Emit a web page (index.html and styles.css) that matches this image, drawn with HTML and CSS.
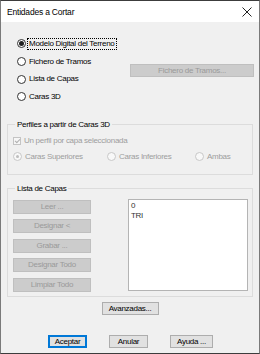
FILE: index.html
```html
<!DOCTYPE html>
<html lang="es">
<head>
    <meta charset="UTF-8">
    <title>Entidades a Cortar</title>
    <link rel="stylesheet" href="styles.css">
</head>
<body>
    <div class="window">
        <div class="titlebar">
            <span class="title">Entidades a Cortar</span>
            <svg class="close" width="10" height="10" viewBox="0 0 10 10">
                <path d="M0.5 0.5 L9.5 9.5 M9.5 0.5 L0.5 9.5" stroke="#222" stroke-width="1" fill="none"/>
            </svg>
        </div>

        <div class="content">
            <div class="source">
                <div class="source-options">
                    <div class="option"><span class="radio checked"></span><span class="label focused">Modelo Digital del Terreno</span></div>
                    <div class="option"><span class="radio"></span><span class="label">Fichero de Tramos</span></div>
                    <div class="option"><span class="radio"></span><span class="label">Lista de Capas</span></div>
                    <div class="option"><span class="radio"></span><span class="label">Caras 3D</span></div>
                </div>
                <button class="btn disabled wide">Fichero de Tramos...</button>
            </div>

            <fieldset class="group group-faces">
                <legend>Perfiles a partir de Caras 3D</legend>
                <div class="option disabled"><span class="check"></span><span class="label">Un perfil por capa seleccionada</span></div>
                <div class="faces-row">
                    <div class="option disabled"><span class="radio checked"></span><span class="label">Caras Superiores</span></div>
                    <div class="option disabled"><span class="radio"></span><span class="label">Caras Inferiores</span></div>
                    <div class="option disabled"><span class="radio"></span><span class="label">Ambas</span></div>
                </div>
            </fieldset>

            <fieldset class="group group-layers">
                <legend>Lista de Capas</legend>
                <div class="layers">
                    <div class="layer-buttons">
                        <button class="btn disabled">Leer ...</button>
                        <button class="btn disabled">Designar &lt;</button>
                        <button class="btn disabled">Grabar ...</button>
                        <button class="btn disabled">Designar Todo</button>
                        <button class="btn disabled">Limpiar Todo</button>
                    </div>
                    <div class="listbox">
                        <div>0</div>
                        <div>TRI</div>
                    </div>
                </div>
            </fieldset>

            <div class="advanced">
                <button class="btn btn-advanced">Avanzadas...</button>
            </div>

            <div class="actions">
                <button class="btn default btn-ok">Aceptar</button>
                <button class="btn btn-ok">Anular</button>
                <button class="btn btn-help">Ayuda ...</button>
            </div>
        </div>
    </div>
</body>
</html>
```

FILE: styles.css
```css
* {
    box-sizing: border-box;
}

body {
    margin: 0;
    font-family: 'Liberation Sans', Arial, sans-serif;
    font-size: 8px;
    letter-spacing: -0.28px;
    color: #000;
    background: #fff;
}

.window {
    width: 260px;
    height: 354px;
    border: 1px solid #7a7a7a;
    border-top-color: #3c3c3c;
    border-bottom-color: #3c3c3c;
    background: #f0f0f0;
    display: flex;
    flex-direction: column;
}

.titlebar {
    height: 21px;
    background: #fff;
    display: flex;
    align-items: center;
    justify-content: space-between;
    padding: 0 6px 0 6px;
}

.title {
    font-size: 8.5px;
    letter-spacing: -0.2px;
    color: #000;
}

.close {
    display: block;
    margin-right: 1px;
}

.content {
    flex: 1;
    display: flex;
    flex-direction: column;
}

/* source selection */

.source {
    display: flex;
    justify-content: space-between;
    align-items: center;
    padding: 13px 5px 0 16px;
}

.option {
    display: flex;
    align-items: center;
    gap: 3px;
    white-space: nowrap;
}

.source-options .option {
    height: 17.7px;
}

.label {
    line-height: 10px;
}

.label.focused {
    outline: 1px dotted #000;
    outline-offset: 0;
    padding: 0 1px;
    margin-left: -1px;
}

.radio {
    width: 9px;
    height: 9px;
    border: 1px solid #333;
    border-radius: 50%;
    background: #fff;
    display: flex;
    align-items: center;
    justify-content: center;
    flex: none;
}

.radio.checked::after {
    content: "";
    width: 5px;
    height: 5px;
    border-radius: 50%;
    background: #222;
}

.check {
    width: 8px;
    height: 8px;
    border: 1px solid #c4c4c4;
    background: #f6f6f6;
    position: relative;
    flex: none;
}

.check::after {
    content: "";
    position: absolute;
    left: 2px;
    top: 0;
    width: 2px;
    height: 4px;
    border: solid #b0b0b0;
    border-width: 0 1px 1px 0;
    transform: rotate(45deg);
}

.option.disabled {
    color: #9d9d9d;
}

.option.disabled .radio {
    border-color: #c8c8c8;
    background: #f8f8f8;
}

.option.disabled .radio.checked::after {
    background: #bdbdbd;
    width: 3px;
    height: 3px;
}

/* buttons */

.btn {
    font-family: inherit;
    font-size: 8px;
    letter-spacing: -0.28px;
    height: 14px;
    padding: 0;
    border: 1px solid #adadad;
    background: #e1e1e1;
    color: #000;
    line-height: 12px;
}

.btn.disabled {
    background: #cccccc;
    border-color: #bfbfbf;
    color: #9a9a9a;
}

.btn.wide {
    width: 124px;
    height: 13px;
    line-height: 11px;
}

.btn.default {
    border-color: #0078d7;
    box-shadow: inset 0 0 0 1px #0078d7;
}

/* group boxes */

.group {
    margin: 0 6px;
    border: 1px solid #dcdcdc;
    min-width: 0;
}

.group legend {
    padding: 0 2px;
    margin-left: 2px;
    line-height: 10px;
}

.group-faces {
    margin-top: 14px;
    padding: 3px 0 8px 5px;
    height: 55px;
}

.group-faces > .option {
    height: 16px;
}

.faces-row {
    display: grid;
    grid-template-columns: 94px 88px 1fr;
    height: 16px;
}

.group-layers {
    margin-top: 9px;
    padding: 5px 4px 3px 5px;
    height: 113px;
}

.layers {
    display: flex;
    justify-content: space-between;
    align-items: flex-start;
}

.layer-buttons {
    display: flex;
    flex-direction: column;
    gap: 5.5px;
    margin-top: 1px;
}

.layer-buttons .btn {
    width: 78px;
}

.listbox {
    width: 120px;
    height: 92px;
    background: #fff;
    border: 1px solid #b4b4b4;
    padding: 1px 2px;
    line-height: 10px;
    color: #333;
}

/* dialog buttons */

.advanced {
    display: flex;
    justify-content: center;
    margin-top: 5px;
}

.btn-advanced {
    width: 57px;
    height: 13px;
    line-height: 11px;
}

.actions {
    display: flex;
    justify-content: center;
    gap: 22px;
    margin-top: 20px;
    padding-left: 1px;
}

.btn-ok {
    width: 39px;
    height: 13px;
    line-height: 11px;
}

.btn-help {
    width: 43px;
    height: 13px;
    line-height: 11px;
}
```
